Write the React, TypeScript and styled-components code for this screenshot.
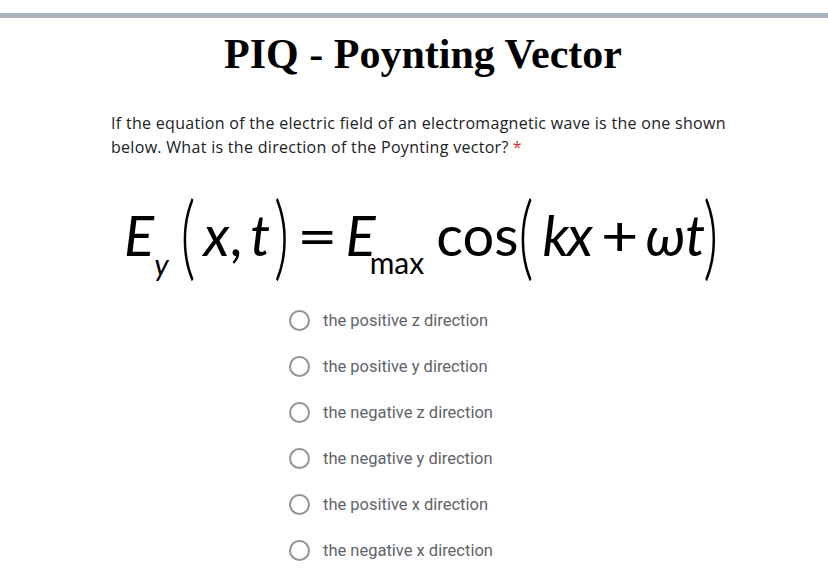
import React from "react";
import styled, { createGlobalStyle } from "styled-components";

const GlobalStyle = createGlobalStyle`
  html, body {
    margin: 0;
    padding: 0;
    background: #ffffff;
  }
`;

const Page = styled.div`
  width: 828px;
  height: 572px;
  overflow: hidden;
  background: #fff;
`;

const TopBar = styled.div`
  margin-top: 13px;
  height: 5px;
  background: #aeb4bc;
`;

const Title = styled.h1`
  margin: 12px 0 0;
  padding-left: 18px;
  text-align: center;
  font-family: "Liberation Serif", "Times New Roman", serif;
  font-weight: 700;
  font-size: 42px;
  line-height: 48px;
  color: #000;
`;

const Question = styled.p`
  margin: 33px 0 0 111px;
  font-family: "Open Sans", sans-serif;
  font-size: 16px;
  line-height: 24px;
  color: #202124;
  letter-spacing: 0.3px;
  white-space: nowrap;
`;

const Required = styled.span`
  color: #d93025;
  margin-left: 4px;
`;

const Equation = styled.div`
  display: flex;
  align-items: baseline;
  margin: 47px 0 0 124px;
  height: 84px;
  font-family: "Lato", "Open Sans", sans-serif;
  font-size: 56px;
  line-height: 56px;
  color: #000;
`;

const Var = styled.span<{ $gap?: number; $tight?: boolean }>`
  font-style: italic;
  margin-left: ${(p) => p.$gap ?? 0}px;
  letter-spacing: ${(p) => (p.$tight ? "-2px" : "0")};
`;

const Upright = styled.span<{ $gap?: number }>`
  margin-left: ${(p) => p.$gap ?? 0}px;
`;

const Operator = styled.span<{ $gap?: number; $stretch: number }>`
  display: inline-block;
  margin-left: ${(p) => p.$gap ?? 0}px;
  margin-right: 6px;
  transform: scaleX(${(p) => p.$stretch});
  transform-origin: 0 50%;
`;

const Sub = styled.span<{ $italic?: boolean; $gap?: number; $drop?: number }>`
  font-size: 30px;
  font-style: ${(p) => (p.$italic ? "italic" : "normal")};
  position: relative;
  top: ${(p) => p.$drop ?? 18}px;
  margin-left: ${(p) => p.$gap ?? 0}px;
`;

const Paren = styled.span<{ $gap?: number }>`
  display: inline-block;
  font-weight: 300;
  font-size: 58px;
  transform: translateY(3px) scaleY(1.6);
  transform-origin: 50% 60%;
  margin-left: ${(p) => p.$gap ?? 0}px;
`;

const Options = styled.div`
  display: flex;
  flex-direction: column;
  gap: 24px;
  margin: 19px 0 0 289px;
`;

const Option = styled.label`
  display: flex;
  align-items: center;
  gap: 13px;
  height: 22px;
  font-family: "Roboto", sans-serif;
  font-size: 16.5px;
  color: #5f6368;
`;

const Radio = styled.span`
  box-sizing: border-box;
  width: 21px;
  height: 21px;
  border: 2px solid #90959a;
  border-radius: 50%;
`;

const options = [
  "the positive z direction",
  "the positive y direction",
  "the negative z direction",
  "the negative y direction",
  "the positive x direction",
  "the negative x direction",
];

export default function App() {
  return (
    <Page>
      <GlobalStyle />
      <TopBar />
      <Title>PIQ - Poynting Vector</Title>
      <Question>
        If the equation of the electric field of an electromagnetic wave is the one shown
        <br />
        below. What is the direction of the Poynting vector?
        <Required>*</Required>
      </Question>
      <Equation>
        <Var>E</Var>
        <Sub $italic $drop={20}>y</Sub>
        <Paren $gap={12}>(</Paren>
        <Var $gap={8}>x</Var>
        <Upright>,</Upright>
        <Var $gap={8}>t</Var>
        <Paren $gap={4}>)</Paren>
        <Operator $gap={8} $stretch={1.25}>=</Operator>
        <Var $gap={10}>E</Var>
        <Sub $gap={-6}>max</Sub>
        <Upright $gap={12}>cos</Upright>
        <Paren>(</Paren>
        <Var $gap={9} $tight>kx</Var>
        <Operator $gap={10} $stretch={1.15}>+</Operator>
        <Var $gap={6}>ωt</Var>
        <Paren $gap={-2}>)</Paren>
      </Equation>
      <Options>
        {options.map((o) => (
          <Option key={o}>
            <Radio />
            {o}
          </Option>
        ))}
      </Options>
    </Page>
  );
}
